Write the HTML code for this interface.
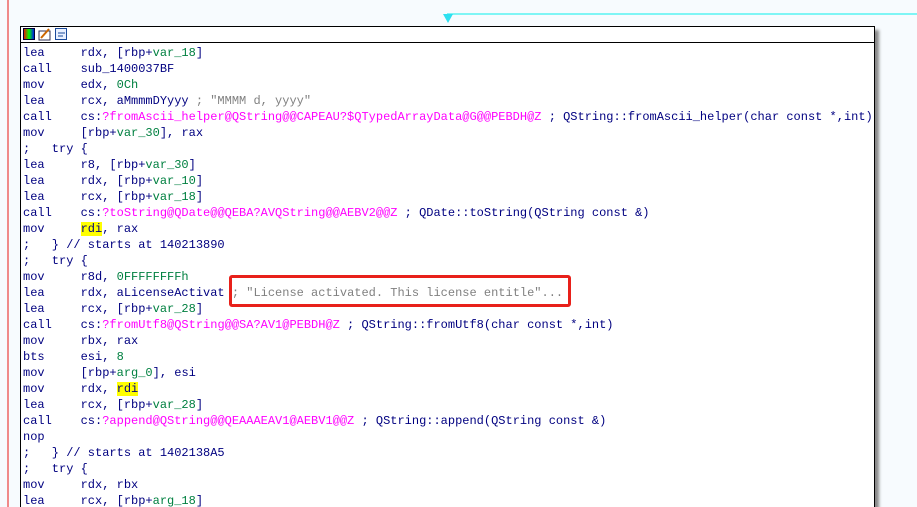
<!DOCTYPE html><html><head><style>
html,body{margin:0;width:917px;height:507px;overflow:hidden}
body{background:#f7fbfe;position:relative;font-family:"Liberation Mono",monospace}
.rl{position:absolute;left:7px;top:0;width:2px;height:507px;background:#f08a8a}
.cy{position:absolute;left:447px;top:13px;width:470px;height:2px;background:#7ff5f5}
.box{position:absolute;left:20px;top:26px;width:853px;height:500px;border:1px solid #000;border-bottom:none;background:#fff;box-shadow:4px 4px 3px #888;overflow:hidden}
.hd{height:15px;border-bottom:1px solid #000;position:relative}
.code{position:absolute;left:2px;top:18px;font-size:12px;line-height:16px;color:#000080;white-space:pre}
.g{color:#008040}.m{color:#ff00ff}.c{color:#808080}.y{background:#ffff00}
.rb{position:absolute;left:229px;top:275px;width:336px;height:26px;border:3px solid #e8201a;border-radius:3px}
</style></head><body>
<div class="rl"></div><div class="cy"></div>
<svg style="position:absolute;left:443px;top:14px" width="10" height="9"><path d="M0 0H10L5 9Z" fill="#2ee0f0"/></svg>
<div class="box"><div class="hd">
<svg style="position:absolute;left:2px;top:1px" width="50" height="13"><defs><linearGradient id="a" x1="0" x2="1"><stop offset="0" stop-color="#f00"/><stop offset=".5" stop-color="#0f0"/><stop offset="1" stop-color="#00f"/></linearGradient></defs><rect x=".5" y=".5" width="11" height="11" fill="url(#a)" stroke="#003"/><rect x="16" y="3" width="11" height="9" fill="#fff" stroke="#335"/><path d="M18 10L26 1" stroke="#c60" stroke-width="2"/><rect x="32.5" y=".5" width="11" height="11" fill="#e8f0ff" stroke="#1a4a9a"/><path d="M35 5h7M35 8h5" stroke="#1a4a9a"/></svg></div>
<div class="code">lea     rdx, [rbp+<span class="g">var_18</span>]
call    sub_1400037BF
mov     edx, <span class="g">0Ch</span>
lea     rcx, aMmmmDYyyy <span class="c">; "MMMM d, yyyy"</span>
call    cs:<span class="m">?fromAscii_helper@QString@@CAPEAU?$QTypedArrayData@G@@PEBDH@Z</span> ; QString::fromAscii_helper(char const *,int)
mov     [rbp+<span class="g">var_30</span>], rax
;   try {
lea     r8, [rbp+<span class="g">var_30</span>]
lea     rdx, [rbp+<span class="g">var_10</span>]
lea     rcx, [rbp+<span class="g">var_18</span>]
call    cs:<span class="m">?toString@QDate@@QEBA?AVQString@@AEBV2@@Z</span> ; QDate::toString(QString const &amp;)
mov     <span class="y">rdi</span>, rax
;   } // starts at 140213890
;   try {
mov     r8d, <span class="g">0FFFFFFFFh</span>
lea     rdx, aLicenseActivat <span class="c">; "License activated. This license entitle"...</span>
lea     rcx, [rbp+<span class="g">var_28</span>]
call    cs:<span class="m">?fromUtf8@QString@@SA?AV1@PEBDH@Z</span> ; QString::fromUtf8(char const *,int)
mov     rbx, rax
bts     esi, <span class="g">8</span>
mov     [rbp+<span class="g">arg_0</span>], esi
mov     rdx, <span class="y">rdi</span>
lea     rcx, [rbp+<span class="g">var_28</span>]
call    cs:<span class="m">?append@QString@@QEAAAEAV1@AEBV1@@Z</span> ; QString::append(QString const &amp;)
nop
;   } // starts at 1402138A5
;   try {
mov     rdx, rbx
lea     rcx, [rbp+<span class="g">arg_18</span>]</div></div>
<div class="rb"></div>
</body></html>
